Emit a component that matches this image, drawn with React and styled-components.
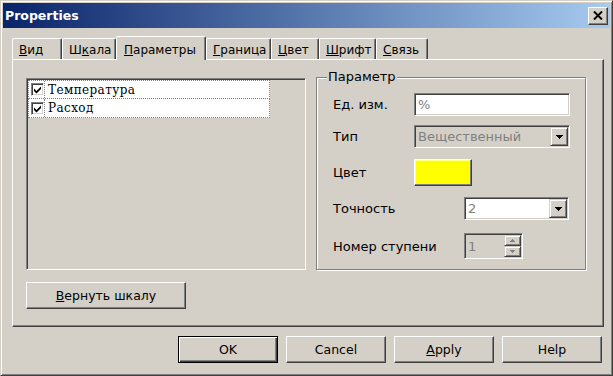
import styled, { createGlobalStyle, css } from "styled-components";

const GlobalStyle = createGlobalStyle`
  html, body {
    margin: 0;
    padding: 0;
    background: #d4d0c8;
  }
  body {
    font-family: "DejaVu Sans", "Liberation Sans", sans-serif;
    font-size: 13px;
    color: #000;
  }
  * {
    box-sizing: border-box;
  }
`;

const raised = css`
  border: 1px solid;
  border-color: #fff #404040 #404040 #fff;
  box-shadow: inset -1px -1px 0 #808080, inset 1px 1px 0 #d4d0c8;
`;

const sunken = css`
  border: 1px solid;
  border-color: #808080 #fff #fff #808080;
  box-shadow: inset 1px 1px 0 #404040, inset -1px -1px 0 #d4d0c8;
`;

const Window = styled.div`
  width: 613px;
  height: 376px;
  display: flex;
  flex-direction: column;
  background: #d4d0c8;
  border: 1px solid;
  border-color: #d4d0c8 #404040 #404040 #d4d0c8;
  box-shadow: inset 1px 1px 0 #fff, inset -1px -1px 0 #808080;
  padding: 2px;
`;

const TitleBar = styled.div`
  height: 25px;
  display: flex;
  align-items: center;
  justify-content: space-between;
  padding: 0 2px 0 2px;
  background: linear-gradient(to right, #0a246a, #a6caf0);
`;

const Title = styled.span`
  color: #fff;
  font-weight: bold;
  font-size: 12.5px;
`;

const CloseButton = styled.div`
  ${raised};
  width: 20px;
  height: 18px;
  background: #d4d0c8;
  display: flex;
  align-items: center;
  justify-content: center;
`;

const Body = styled.div`
  flex: 1;
  display: flex;
  flex-direction: column;
  padding: 8px 6px 0 9px;
`;

const TabStrip = styled.div`
  height: 23px;
  display: flex;
  align-items: flex-end;
`;

const Tab = styled.div`
  position: relative;
  z-index: ${(p) => (p.$active ? 1 : 0)};
  width: ${(p) => p.$w}px;
  height: ${(p) => (p.$active ? 24 : 21)}px;
  margin-bottom: ${(p) => (p.$active ? -1 : 0)}px;
  display: flex;
  align-items: center;
  padding: ${(p) => (p.$active ? "2px 0 0 7px" : "2px 0 0 6px")};
  font-size: 12px;
  background: #d4d0c8;
  border-top: 1px solid #fff;
  border-left: 1px solid #fff;
  border-right: 1px solid #404040;
  border-radius: 2px 2px 0 0;
  box-shadow: inset -1px 0 0 #808080;
  white-space: nowrap;
  overflow: hidden;
`;

const Panel = styled.div`
  height: 268px;
  display: flex;
  flex-direction: column;
  padding: 17px 14px 0 13px;
  border: 1px solid;
  border-color: #fff #404040 #404040 #fff;
  box-shadow: inset -1px -1px 0 #808080;
`;

const Content = styled.div`
  height: 193px;
  display: flex;
  gap: 10px;
`;

const ListBox = styled.div`
  ${sunken};
  width: 280px;
  margin-top: 1px;
  padding: 1px;
  background: #d4d0c8;
`;

const ListRow = styled.div`
  width: 242px;
  height: 19px;
  display: flex;
  background: #fff;
  border: 1px dotted #808080;

  & + & {
    border-top: 0;
  }
`;

const CheckCell = styled.div`
  width: 16px;
  display: flex;
  align-items: center;
  padding-left: 2px;
  border-right: 1px dotted #808080;
`;

const CheckBox = styled.div`
  ${sunken};
  width: 13px;
  height: 13px;
  background: #fff;
  display: flex;
  align-items: center;
  justify-content: center;
`;

const ItemText = styled.div`
  display: flex;
  align-items: center;
  padding-left: 3px;
  font-family: "DejaVu Serif", "Liberation Serif", serif;
  font-size: 12px;
  letter-spacing: 0.4px;
`;

const Group = styled.div`
  position: relative;
  width: 270px;
  display: flex;
  flex-direction: column;
  padding: 15px 0 0 16px;
  border: 1px solid #808080;
  box-shadow: inset 1px 1px 0 #fff, 1px 1px 0 #fff;
`;

const Legend = styled.span`
  position: absolute;
  top: -9px;
  left: 10px;
  padding: 0 1px;
  line-height: 16px;
  background: #d4d0c8;
`;

const FieldRow = styled.div`
  height: ${(p) => p.$h}px;
  margin-top: ${(p) => p.$mt || 0}px;
  display: flex;
  align-items: center;
`;

const FieldLabel = styled.div`
  width: ${(p) => p.$w}px;
`;

const Field = styled.div`
  ${sunken};
  width: ${(p) => p.$w}px;
  height: 100%;
  display: flex;
  align-items: center;
  justify-content: space-between;
  padding: 1px 1px 1px 3px;
  background: ${(p) => (p.$disabled ? "#d4d0c8" : "#fff")};
  color: #808080;
  font-size: 13px;
`;

const DropButton = styled.div`
  width: 18px;
  height: 100%;
  display: flex;
  align-items: center;
  justify-content: center;
  background: #d4d0c8;
  border: 1px solid;
  border-color: #d4d0c8 #404040 #404040 #d4d0c8;
  box-shadow: inset 1px 1px 0 #fff, inset -1px -1px 0 #808080;
`;

const SpinColumn = styled.div`
  width: 17px;
  height: 100%;
  display: flex;
  flex-direction: column;
`;

const SpinButton = styled(DropButton)`
  width: 17px;
  height: 50%;
`;

const Swatch = styled.div`
  ${raised};
  width: 58px;
  height: 100%;
  background: #ffff00;
  box-shadow: inset -1px -1px 0 #808080, inset 1px 1px 0 #ffff80;
`;

const Button = styled.div`
  ${raised};
  width: ${(p) => p.$w || 100}px;
  height: 27px;
  display: flex;
  align-items: center;
  justify-content: center;
  background: #d4d0c8;
  font-size: 12.5px;

  ${(p) =>
    p.$default &&
    css`
      border: 1px solid #000;
      box-shadow: inset 1px 1px 0 #fff, inset -1px -1px 0 #404040,
        inset -2px -2px 0 #808080;
    `}
`;

const ResetButton = styled(Button)`
  margin-top: 12px;
`;

const Footer = styled.div`
  display: flex;
  justify-content: flex-end;
  gap: 8px;
  margin-top: 9px;
  padding-right: 2px;
`;

const CloseIcon = () => (
  <svg width="10" height="9" viewBox="0 0 10 9">
    <path d="M1 0.5 L9 8.5 M9 0.5 L1 8.5" stroke="#000" strokeWidth="2" />
  </svg>
);

const DownArrow = ({ color = "#000" }) => (
  <svg width="7" height="4" viewBox="0 0 7 4" shapeRendering="crispEdges">
    <path
      d="M0 0 H7 V1 H6 V2 H5 V3 H4 V4 H3 V3 H2 V2 H1 V1 H0 Z"
      fill={color}
    />
  </svg>
);

const SmallArrow = ({ up }) => (
  <svg width="5" height="3" viewBox="0 0 5 3" shapeRendering="crispEdges">
    <path
      d={
        up
          ? "M2 0 H3 V1 H4 V2 H5 V3 H0 V2 H1 V1 H2 Z"
          : "M0 0 H5 V1 H4 V2 H3 V3 H2 V2 H1 V1 H0 Z"
      }
      fill="#808080"
    />
  </svg>
);

const CheckMark = () => (
  <svg width="9" height="9" viewBox="0 0 9 9">
    <path d="M1 3.5 L3.5 6 L8 1.5 V4 L3.5 8.5 L1 6 Z" fill="#000" />
  </svg>
);

const tabs = [
  { key: "v", w: 50, first: "В", rest: "ид" },
  { key: "s", w: 54, first: "Ш", u: "к", rest: "ала" },
  { key: "p", w: 90, first: "П", rest: "араметры", active: true },
  { key: "g", w: 65, first: "Г", rest: "раница" },
  { key: "c", w: 48, first: "Ц", rest: "вет" },
  { key: "f", w: 57, first: "Ш", rest: "рифт" },
  { key: "l", w: 52, first: "С", rest: "вязь" },
];

const items = ["Температура", "Расход"];

const App = () => {
  return (
    <>
      <GlobalStyle />
      <Window>
        <TitleBar>
          <Title>Properties</Title>
          <CloseButton>
            <CloseIcon />
          </CloseButton>
        </TitleBar>
        <Body>
          <TabStrip>
            {tabs.map((t) =>
              t.u ? (
                <Tab key={t.key} $w={t.w} $active={t.active}>
                  {t.first}
                  <u>{t.u}</u>
                  {t.rest}
                </Tab>
              ) : (
                <Tab key={t.key} $w={t.w} $active={t.active}>
                  <u>{t.first}</u>
                  {t.rest}
                </Tab>
              )
            )}
          </TabStrip>
          <Panel>
            <Content>
              <ListBox>
                {items.map((name) => (
                  <ListRow key={name}>
                    <CheckCell>
                      <CheckBox>
                        <CheckMark />
                      </CheckBox>
                    </CheckCell>
                    <ItemText>{name}</ItemText>
                  </ListRow>
                ))}
              </ListBox>
              <Group>
                <Legend>Параметр</Legend>
                <FieldRow $h={23}>
                  <FieldLabel $w={81}>Ед. изм.</FieldLabel>
                  <Field $w={156}>%</Field>
                </FieldRow>
                <FieldRow $h={23} $mt={9}>
                  <FieldLabel $w={81}>Тип</FieldLabel>
                  <Field $w={156} $disabled>
                    Вещественный
                    <DropButton>
                      <DownArrow />
                    </DropButton>
                  </Field>
                </FieldRow>
                <FieldRow $h={27} $mt={11}>
                  <FieldLabel $w={81}>Цвет</FieldLabel>
                  <Swatch />
                </FieldRow>
                <FieldRow $h={23} $mt={11}>
                  <FieldLabel $w={131}>Точность</FieldLabel>
                  <Field $w={105}>
                    2
                    <DropButton>
                      <DownArrow />
                    </DropButton>
                  </Field>
                </FieldRow>
                <FieldRow $h={26} $mt={13}>
                  <FieldLabel $w={131}>Номер ступени</FieldLabel>
                  <Field $w={59} $disabled>
                    1
                    <SpinColumn>
                      <SpinButton>
                        <SmallArrow up />
                      </SpinButton>
                      <SpinButton>
                        <SmallArrow />
                      </SpinButton>
                    </SpinColumn>
                  </Field>
                </FieldRow>
              </Group>
            </Content>
            <ResetButton $w={160}>
              <u>В</u>ернуть шкалу
            </ResetButton>
          </Panel>
          <Footer>
            <Button $default>OK</Button>
            <Button>Cancel</Button>
            <Button>
              <u>A</u>pply
            </Button>
            <Button>Help</Button>
          </Footer>
        </Body>
      </Window>
    </>
  );
};

export default App;
